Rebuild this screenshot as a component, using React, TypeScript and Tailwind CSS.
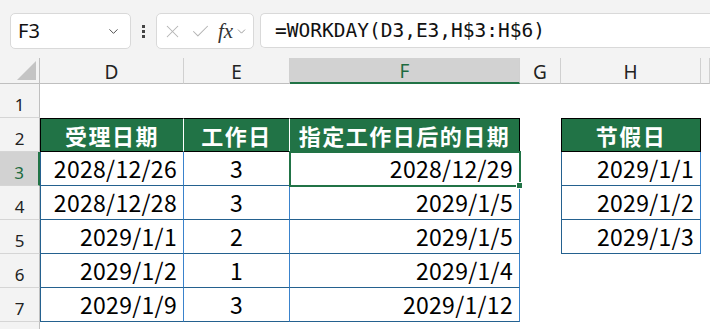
import type { ReactNode } from 'react';
import { ChevronDown, X, Check } from 'lucide-react';

/* Excel-style sheet: WORKDAY example with a holiday list */

const GREEN = 'bg-[#217346]';

function ColHead({ label, active }: { label?: string; active?: boolean }) {
  return (
    <div
      className={`flex items-center justify-center border-r border-[#d0d0d0] font-['Noto_Sans',sans-serif] text-[19px] leading-none ${
        active
          ? 'bg-[#d2d2d2] text-[#1d6b40] border-b-2 border-b-[#217346]'
          : 'bg-[#f3f3f3] text-[#222] border-b border-b-[#bfbfbf]'
      }`}
    >
      <span className="pt-[3px]">{label}</span>
    </div>
  );
}

function RowHead({ n, active }: { n: string; active?: boolean }) {
  return (
    <div
      className={`flex items-end justify-center pb-[4px] border-b border-[#d5d5d5] font-['Noto_Sans',sans-serif] text-[17px] leading-none ${
        active
          ? 'bg-[#d2d2d2] text-[#1d6b40] border-r-2 border-r-[#217346]'
          : 'bg-[#f3f3f3] text-[#222] border-r border-r-[#bfbfbf]'
      }`}
    >
      {n}
    </div>
  );
}

function Head({ children, first, last }: { children?: ReactNode; first?: boolean; last?: boolean }) {
  return (
    <div
      className={`${GREEN} flex items-center justify-center border-t border-b border-black text-white font-bold text-[22px] tracking-[1.5px] font-['Noto_Sans_CJK_SC',sans-serif] ${
        first ? 'border-l' : ''
      } ${last ? 'border-r border-r-black' : 'border-r border-r-white'}`}
    >
      {children}
    </div>
  );
}

function Cell({
  children,
  align = 'right',
  left,
  sel
}: {
  children?: ReactNode;
  align?: 'right' | 'center';
  left?: boolean;
  sel?: boolean;
}) {
  return (
    <div
      className={`relative flex items-center px-[6px] border-r border-r-[#3a83cc] border-b border-b-[#24618f] bg-white text-black text-[23px] leading-none font-['Noto_Sans_CJK_SC',sans-serif] ${
        align === 'center' ? 'justify-center' : 'justify-end'
      } ${left ? 'border-l border-l-[#24618f]' : ''}`}
    >
      <span className="tracking-[0.3px]">{children}</span>
      {sel && (
        <>
          <div className="absolute left-[-1px] top-[-1px] right-[-2px] bottom-[-2px] border-2 border-[#217346] z-10" />
          <div className="absolute right-[-4px] bottom-[-4px] w-[7px] h-[7px] bg-[#217346] border border-white z-20" />
        </>
      )}
    </div>
  );
}

const Blank = () => <div className="bg-white" />;

const rows = [
  ['2028/12/26', '3', '2028/12/29', '2029/1/1'],
  ['2028/12/28', '3', '2029/1/5', '2029/1/2'],
  ['2029/1/1', '2', '2029/1/5', '2029/1/3'],
  ['2029/1/2', '1', '2029/1/4', ''],
  ['2029/1/9', '3', '2029/1/12', '']
];

export default function App() {
  return (
    <div className="w-[710px] h-[329px] overflow-hidden bg-white flex flex-col">
      {/* formula bar */}
      <div className="h-[58px] shrink-0 bg-[#f3f3f3] flex items-start pt-[13px] pl-[10px]">
        <div className="w-[121px] h-[36px] rounded-[5px] border border-[#d9d9d9] bg-white flex items-center justify-between pl-[7px] pr-[9px]">
          <span className="font-['Noto_Sans',sans-serif] text-[20px] text-[#111]">F3</span>
          <ChevronDown size={15} strokeWidth={1.5} className="text-[#444]" />
        </div>
        <div className="w-[25px] h-[36px] flex flex-col items-center justify-center gap-[2px]">
          <span className="w-[3px] h-[3px] bg-[#444]" />
          <span className="w-[3px] h-[3px] bg-[#444]" />
          <span className="w-[3px] h-[3px] bg-[#444]" />
        </div>
        <div className="w-[98px] h-[36px] rounded-[5px] border border-[#d9d9d9] bg-white flex items-center pl-[5px] gap-[7px]">
          <X size={21} strokeWidth={1.2} className="text-[#b4b4b4]" />
          <Check size={21} strokeWidth={1.2} className="text-[#b4b4b4]" />
          <span className="flex items-center">
            <span className="font-['Liberation_Serif',serif] italic text-[21px] text-[#333] leading-none">fx</span>
            <ChevronDown size={13} strokeWidth={1.5} className="text-[#888] ml-[2px]" />
          </span>
        </div>
        <div className="ml-[6px] flex-1 h-[35px] rounded-l-[5px] border border-r-0 border-[#d9d9d9] bg-white flex items-center pl-[14px]">
          <span className="font-['DejaVu_Sans_Mono',monospace] text-[19.5px] text-[#111]">=WORKDAY(D3,E3,H$3:H$6)</span>
        </div>
      </div>

      {/* sheet */}
      <div className="grid grid-cols-[40px_144px_106px_230px_41px_140px_9px] grid-rows-[26px_repeat(7,34px)_7px]">
        <div className="relative bg-[#f3f3f3] border-r border-b border-[#bfbfbf]">
          <svg className="absolute right-[3px] bottom-[3px]" width="19" height="19" viewBox="0 0 19 19">
            <polygon points="19,0 19,19 0,19" fill="#c4c4c4" />
          </svg>
        </div>
        <ColHead label="D" />
        <ColHead label="E" />
        <ColHead label="F" active />
        <ColHead label="G" />
        <ColHead label="H" />
        <ColHead />

        {/* row 1 */}
        <RowHead n="1" />
        <Blank /><Blank /><Blank /><Blank /><Blank /><Blank />

        {/* row 2 */}
        <RowHead n="2" />
        <Head first>受理日期</Head>
        <Head>工作日</Head>
        <Head last>指定工作日后的日期</Head>
        <Blank />
        <Head first last>节假日</Head>
        <Blank />

        {rows.map((r, i) => (
          <div key={i} className="contents">
            <RowHead n={String(i + 3)} active={i === 0} />
            <Cell left>{r[0]}</Cell>
            <Cell align="center">{r[1]}</Cell>
            <Cell sel={i === 0}>{r[2]}</Cell>
            <Blank />
            {r[3] ? <Cell left>{r[3]}</Cell> : <Blank />}
            <Blank />
          </div>
        ))}

        {/* row 8, cut off */}
        <div className="bg-[#f3f3f3] border-r border-[#bfbfbf]" />
        <Blank /><Blank /><Blank /><Blank /><Blank /><Blank />
      </div>
    </div>
  );
}
